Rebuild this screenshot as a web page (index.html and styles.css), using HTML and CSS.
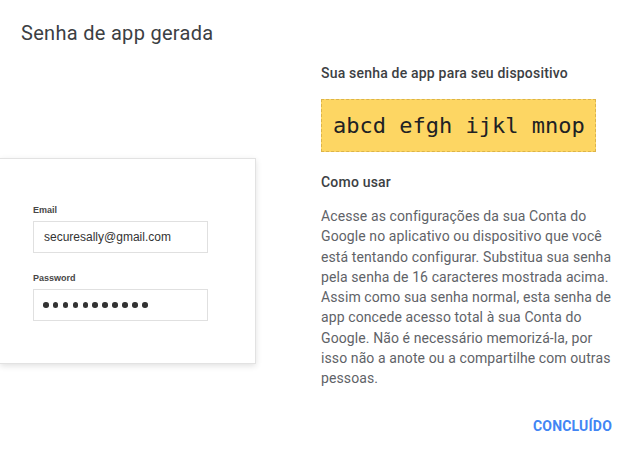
FILE: index.html
```html
<!DOCTYPE html>
<html lang="pt-BR">
<head>
<meta charset="utf-8">
<title>Senha de app gerada</title>
<link rel="stylesheet" href="styles.css">
</head>
<body>
<div class="dialog">
  <h1 class="title">Senha de app gerada</h1>
  <div class="main">
    <div class="illustration">
      <div class="card">
        <div class="field-label">Email</div>
        <div class="field-input">securesally@gmail.com</div>
        <div class="field-label field-label--second">Password</div>
        <div class="field-input field-input--dots">
          <span class="dot"></span><span class="dot"></span><span class="dot"></span><span class="dot"></span><span class="dot"></span><span class="dot"></span><span class="dot"></span><span class="dot"></span><span class="dot"></span><span class="dot"></span><span class="dot"></span>
        </div>
      </div>
    </div>
    <div class="info">
      <h2 class="subhead">Sua senha de app para seu dispositivo</h2>
      <div class="password-box">abcd efgh ijkl mnop</div>
      <h2 class="subhead subhead--usage">Como usar</h2>
      <p class="usage-text">Acesse as configurações da sua Conta do Google no aplicativo ou dispositivo que você está tentando configurar. Substitua sua senha pela senha de 16 caracteres mostrada acima. Assim como sua senha normal, esta senha de app concede acesso total à sua Conta do Google. Não é necessário memorizá-la, por isso não a anote ou a compartilhe com outras pessoas.</p>
    </div>
  </div>
  <div class="actions">
    <button class="done-btn" type="button">CONCLUÍDO</button>
  </div>
</div>
</body>
</html>
```

FILE: styles.css
```css
* { box-sizing: border-box; }

html, body {
  margin: 0;
  padding: 0;
  background: #ffffff;
}

body {
  font-family: Roboto, "Noto Sans", Arial, sans-serif;
  color: #3c4043;
  width: 625px;
  height: 459px;
  overflow: hidden;
}

.dialog {
  width: 625px;
  height: 459px;
  display: flex;
  flex-direction: column;
}

.title {
  margin: 0;
  padding: 21px 0 0 21px;
  font-size: 20px;
  line-height: 24px;
  font-weight: 400;
  letter-spacing: 0.3px;
  color: #3c4043;
}

.main {
  display: grid;
  grid-template-columns: 321px 293px;
}

.illustration {
  padding-top: 113px;
}

.card {
  width: 256px;
  border: 1px solid #e2e2e2;
  border-left: none;
  background: #fff;
  box-shadow: 0 2px 6px rgba(0, 0, 0, 0.12);
  padding: 46px 0 42px 33px;
  font-family: "Liberation Sans", Arial, sans-serif;
}

.field-label {
  font-size: 9px;
  line-height: 11px;
  font-weight: 700;
  color: #474747;
  margin-bottom: 5px;
}

.field-label--second {
  margin-top: 20px;
}

.field-input {
  width: 175px;
  height: 32px;
  border: 1px solid #e0e0e0;
  padding: 0 0 0 10px;
  font-size: 12px;
  line-height: 30px;
  color: #333;
}

.field-input--dots {
  display: flex;
  align-items: center;
  gap: 4.3px;
  padding-left: 9px;
}

.dot {
  width: 5.6px;
  height: 5.6px;
  border-radius: 50%;
  background: #333;
}

.info {
  padding-top: 18px;
}

.subhead {
  margin: 0;
  font-size: 14px;
  line-height: 20px;
  font-weight: 500;
  letter-spacing: 0.2px;
  color: #3c4043;
}

.password-box {
  margin-top: 16px;
  width: 275px;
  height: 53px;
  background: #fdd663;
  border: 1px dashed #dcb44a;
  padding: 13px 0 0 11px;
  font-family: "DejaVu Sans Mono", "Liberation Mono", monospace;
  font-size: 22px;
  line-height: 26px;
  color: #202124;
  white-space: nowrap;
}

.subhead--usage {
  margin-top: 20px;
}

.usage-text {
  margin: 14px 0 0;
  font-size: 14px;
  line-height: 20.25px;
  color: #5f6368;
  letter-spacing: 0.1px;
}

.actions {
  display: flex;
  justify-content: flex-end;
  padding: 30px 13px 0 0;
}

.done-btn {
  border: none;
  background: none;
  padding: 0;
  font-family: Roboto, Arial, sans-serif;
  font-size: 14px;
  line-height: 16px;
  font-weight: 700;
  letter-spacing: 0.2px;
  color: #4285f4;
  cursor: pointer;
}
```
